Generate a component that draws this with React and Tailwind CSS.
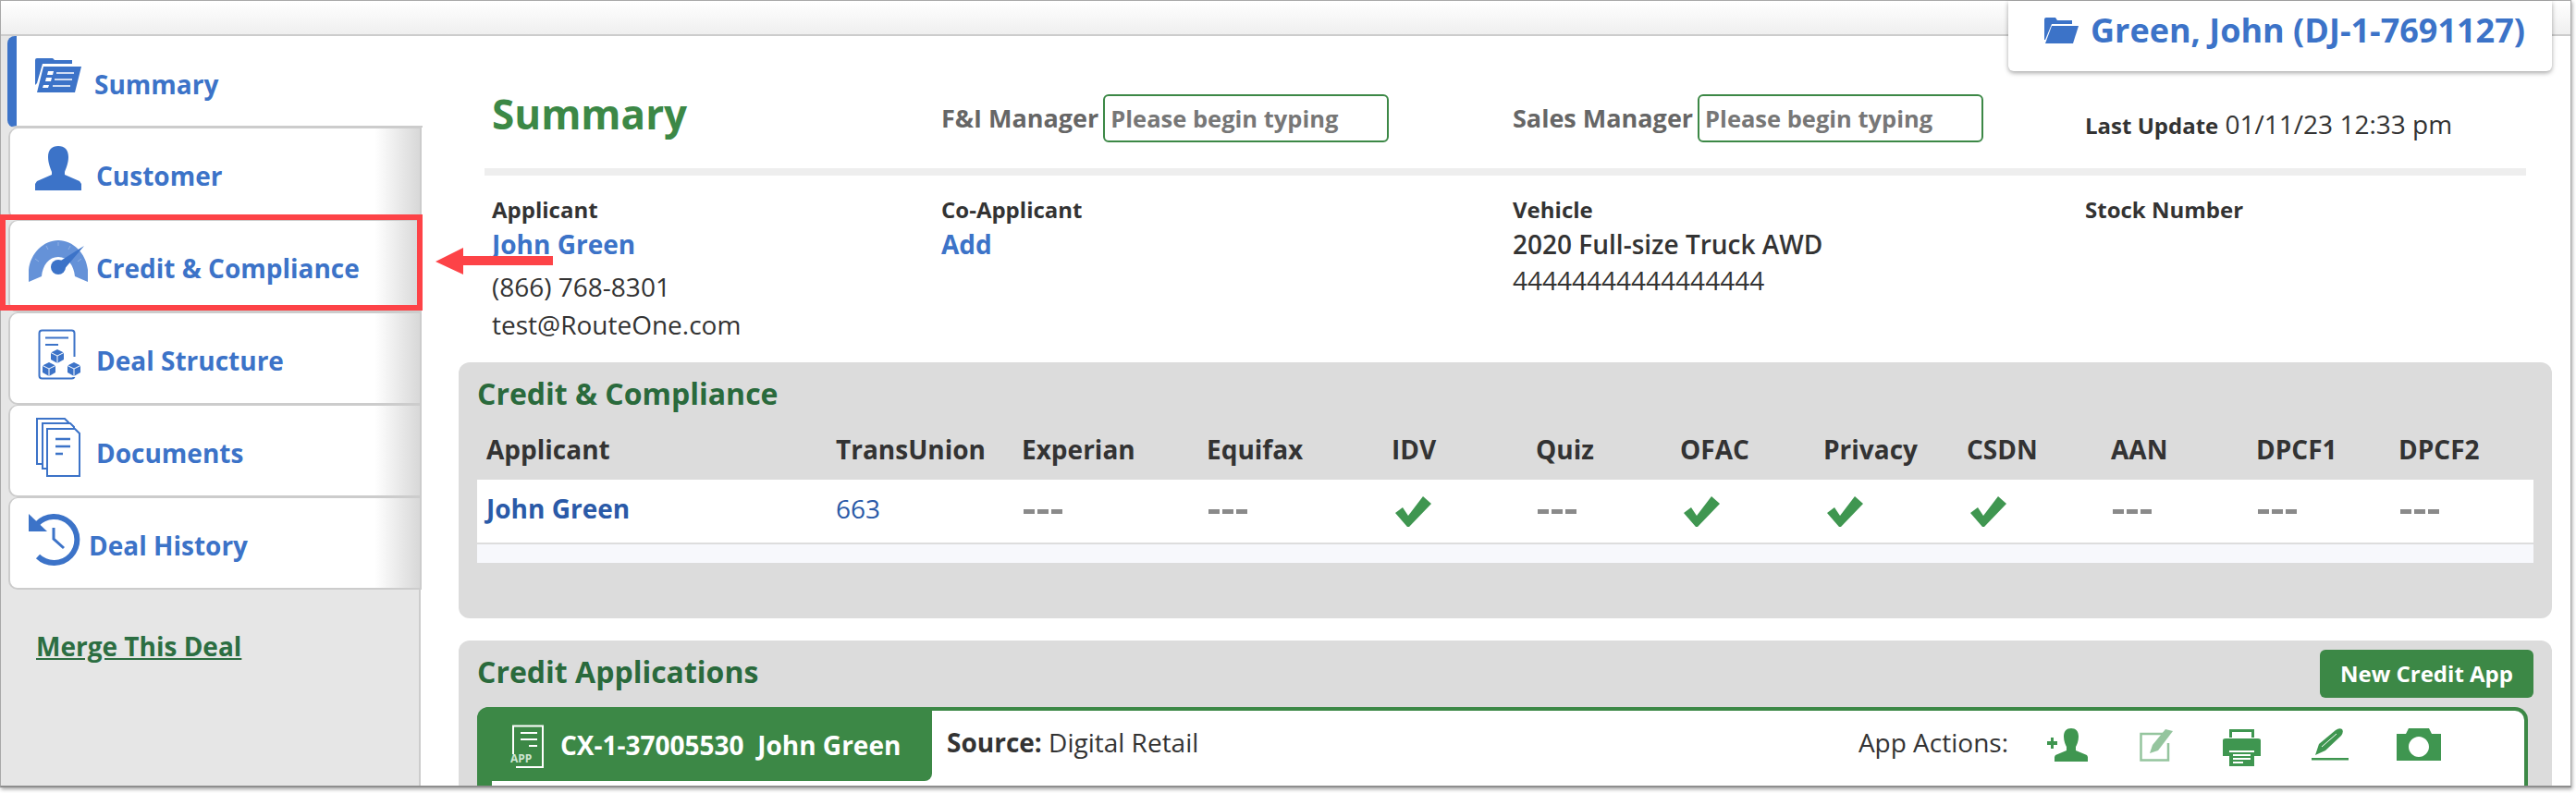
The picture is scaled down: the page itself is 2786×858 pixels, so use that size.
import React from 'react';

const tableCols = 'grid grid-cols-[378px_201px_200px_200px_156px_156px_155px_155px_156px_157px_154px_1fr]';

const SummaryIcon = () => (
  <svg width="50" height="38" viewBox="0 0 50 38" fill="#3c73c8">
    <path d="M0 3 Q0 1 2 1 H19 L21 3 H40 V7 H8 L2 28 L0 30 Z" />
    <path d="M9 10 H50 L43 38 H2 Z" />
    <path d="M14 15 H20 L19 19 H13 Z M12 22 H18 L17 26 H11 Z M9 30 H15 L14 33 H8 Z" fill="#fff" />
    <path d="M23 17 H42 M21 24 H40 M19 31 H38" stroke="#fff" strokeWidth="1.5" />
  </svg>
);

const UserIcon = () => (
  <svg width="50" height="48" viewBox="0 0 50 48" fill="#3c73c8">
    <path d="M25 0 C32 0 36 4 36 12 C36 19 33 25 32 28 V31 L48 38 L50 41 V48 H0 V41 L2 38 L18 31 V28 C17 25 14 19 14 12 C14 4 18 0 25 0 Z" />
  </svg>
);

const GaugeIcon = () => (
  <svg width="64" height="45" viewBox="0 0 64 45">
    <path d="M0 45 V32 C2 14 16 0 32 0 C48 0 62 14 64 32 V45 L50 39 C49 27 42 18 32 18 C22 18 15 27 14 39 Z" fill="#6592d8" />
    <path d="M7 20 L11 23 M19 6 L21 10 M32 2 V6 M45 6 L43 10 M57 20 L53 23" stroke="#8fb0e4" strokeWidth="1" />
    <circle cx="32" cy="29" r="8" fill="#3c73c8" />
    <path d="M30 25 L60 6 L37 33 Z" fill="#3c73c8" />
  </svg>
);

const Cube = ({ x, y }) => (
  <g transform={`translate(${x} ${y})`}>
    <path d="M7 0 L14 3.5 V11 L7 15 L0 11 V3.5 Z" fill="#3c73c8" />
    <path d="M0 3.5 L7 7 L14 3.5 M7 7 V15" stroke="#fff" strokeWidth="1" fill="none" />
  </g>
);

const StructureIcon = () => (
  <svg width="47" height="56" viewBox="0 0 47 56" fill="none">
    <rect x="1.5" y="1.5" width="38" height="52" rx="3" stroke="#3c73c8" strokeWidth="2" />
    <path d="M8 9.5 H33 M8 17 H22" stroke="#3c73c8" strokeWidth="2" />
    <rect x="10" y="20" width="24" height="30" fill="#fff" stroke="none" />
    <rect x="30" y="30" width="17" height="22" fill="#fff" />
    <Cube x="14" y="22" />
    <Cube x="5" y="36" />
    <Cube x="32" y="36" />
  </svg>
);

const DocumentsIcon = () => (
  <svg width="49" height="64" viewBox="0 0 49 64" fill="#fff" stroke="#3c73c8" strokeWidth="2">
    <path d="M2 1 H32 L36 5 V50 H2 Z" />
    <path d="M8 6 H38 L42 10 V55 H8 Z" />
    <path d="M13 12 H43 L48 17 V63 H13 Z" />
    <path d="M22 23 H38 M22 31 H38 M22 39 H30" strokeWidth="2.5" fill="none" />
  </svg>
);

const HistoryIcon = () => (
  <svg width="57" height="57" viewBox="0 0 57 57" fill="none">
    <path d="M9 12 A25 25 0 1 1 10 47" stroke="#3c73c8" strokeWidth="6" />
    <path d="M0 1 L20 20 H0 Z" fill="#3c73c8" />
    <path d="M27 16 V28 L38 38" stroke="#3c73c8" strokeWidth="3" />
  </svg>
);

const FolderOpen = () => (
  <svg width="37" height="28" viewBox="0 0 37 28" fill="#3c73c8">
    <path d="M0 2 Q0 0 2 0 H12 L14 3 H30 V7 H8 L1 24 H0 Z" />
    <path d="M8 9 H37 L31 28 H1 Z" />
  </svg>
);

const Check = () => (
  <svg className="ml-[2px]" width="39" height="33" viewBox="0 0 39 33" fill="#3f9650">
    <path d="M0 18 L8 12 L14 21 L30 0 L39 8 L15 33 L13 33 Z" />
  </svg>
);

const Dashes = () => (
  <div className="flex gap-[3px]">
    <span className="w-[12px] h-[5px] bg-[#8a8a8a]" />
    <span className="w-[12px] h-[5px] bg-[#8a8a8a]" />
    <span className="w-[12px] h-[5px] bg-[#8a8a8a]" />
  </div>
);

const AppIcon = () => (
  <svg className="mt-[6px]" width="38" height="48" viewBox="0 0 38 48" fill="none" stroke="#fff">
    <path d="M3 32 V1.5 H35 V46 H6" strokeWidth="2" />
    <path d="M11 9 H29 M11 16 H29 M20 23 H29" strokeWidth="2" />
    <text x="0" y="41" fontSize="12" fontWeight="700" fill="#cfe6d3" stroke="none" fontFamily="Open Sans">APP</text>
  </svg>
);

const AddUserIcon = () => (
  <svg width="44" height="36" viewBox="0 0 44 36" fill="#3f9650">
    <path d="M26 0 C31 0 34 3 34 9 C34 14 32 18 31 20 V24 L43 29 L44 31 V36 H8 V31 L9 29 L21 24 V20 C20 18 18 14 18 9 C18 3 21 0 26 0 Z" />
    <path d="M0 14 H4 V10 H7 V14 H11 V18 H7 V22 H4 V18 H0 Z" />
  </svg>
);

const EditIcon = () => (
  <svg width="36" height="36" viewBox="0 0 36 36" fill="none" opacity="0.55">
    <path d="M26 6 H1.5 V34.5 H31 V16" stroke="#3f9650" strokeWidth="2.5" />
    <path d="M11 27 L14 18 L28 1 L36 3 L20 24 Z" fill="#3f9650" />
  </svg>
);

const PrintIcon = () => (
  <svg width="41" height="41" viewBox="0 0 41 41" fill="#3f9650">
    <path d="M7 1 H34 V10 H31 V4 H10 V10 H7 Z" />
    <path d="M0 13 Q0 11 3 11 H38 Q41 11 41 13 V30 H34 V24 H7 V30 H0 Z" />
    <path d="M7 26 H34 V41 H7 Z" />
    <path d="M11 29 H30 M11 33 H30 M11 37 H22" stroke="#fff" strokeWidth="2" />
  </svg>
);

const PenIcon = () => (
  <svg width="41" height="36" viewBox="0 0 41 36" fill="#3f9650">
    <path d="M4 29 L8 17 L26 2 Q30 -1 33 1 Q35 4 32 8 L15 24 Z" />
    <path d="M11 20 L27 6" stroke="#fff" strokeWidth="1" />
    <rect x="0" y="32" width="40" height="2.5" />
  </svg>
);

const CameraIcon = () => (
  <svg width="48" height="35" viewBox="0 0 48 35" fill="#3f9650">
    <path fillRule="evenodd" d="M0 6 H10 L13 0 H35 L38 6 H48 V35 H0 Z M24 9 C18 9 13 14 13 20 C13 26 18 31 24 31 C30 31 35 26 35 20 C35 14 30 9 24 9 Z" />
    <ellipse cx="24" cy="20" rx="6" ry="10" fill="#fff" />
  </svg>
);

const tabs = [
  { label: 'Customer', icon: <UserIcon />, iconClass: 'ml-[27px] mb-[12px]', labelClass: 'ml-[16px]' },
  { label: 'Credit & Compliance', icon: <GaugeIcon />, iconClass: 'ml-[20px] mb-[10px]', labelClass: 'ml-[9px]' },
  { label: 'Deal Structure', icon: <StructureIcon />, iconClass: 'ml-[30px] mb-[8px]', labelClass: 'ml-[16px]' },
  { label: 'Documents', icon: <DocumentsIcon />, iconClass: 'ml-[27px] mb-[8px]', labelClass: 'ml-[17px]' },
  { label: 'Deal History', icon: <HistoryIcon />, iconClass: 'ml-[20px] mb-[8px]', labelClass: 'ml-[8px]' },
];

const bureauRow = [
  <Dashes />, <Dashes />, <Check />, <Dashes />, <Check />, <Check />, <Check />, <Dashes />, <Dashes />, <Dashes />,
];

const App = () => {
  return (
    <div className="relative w-[2786px] h-[858px] bg-white overflow-hidden font-['Open_Sans',sans-serif] text-[#333]">
      {/* Window frame */}
      <div className="w-[2781px] h-[852px] flex flex-col border border-[#a8a8a8] border-b-2 border-b-[#8e8e8e] shadow-[1px_2px_4px_rgba(0,0,0,0.35)] overflow-hidden">
        <div className="h-[38px] shrink-0 bg-linear-to-b from-white to-[#efefef] border-b-2 border-[#ccc]" />

        <div className="flex flex-1 min-h-0">
          {/* Sidebar */}
          <div className="w-[454px] shrink-0 bg-[#e6e6e6] border-r-2 border-[#ccc]">
            <div className="relative w-[449px] h-[99px] ml-[7px] flex items-center bg-white border-l-[10px] border-[#3c73c8] border-b-2 border-b-[#ccc] rounded-l-[8px]">
              <div className="ml-[20px] mb-[14px]"><SummaryIcon /></div>
              <span className="ml-[14px] pt-[6px] text-[28px] font-bold text-[#3c73c8]">Summary</span>
            </div>
            {tabs.map((tab) => (
              <div
                key={tab.label}
                className="w-[447px] h-[100px] ml-[8px] flex items-center bg-linear-to-r from-white from-[89%] to-[#d8d8d8] border-2 border-t-[1px] border-[#ccc] border-r-[#ccc] rounded-l-[10px]"
              >
                <div className={tab.iconClass}>{tab.icon}</div>
                <span className={`${tab.labelClass} pt-[5px] text-[28px] font-bold text-[#3c73c8]`}>{tab.label}</span>
              </div>
            ))}
            <div className="mt-[40px] ml-[38px]">
              <a className="text-[28px] font-bold text-[#2c6e42] underline">Merge This Deal</a>
            </div>
          </div>

          {/* Main */}
          <div className="flex-1 min-w-0 pl-[41px] pr-[20px]">
            <div className="mx-[28px]">
              <div className="grid grid-cols-[486px_618px_619px_1fr] h-[151px] items-center border-b-8 border-[#eee] pl-[8px] pt-[35px]">
                <h1 className="text-[44px] font-bold text-[#3c8846] -mt-[10px]">Summary</h1>
                <div className="flex items-center gap-[5px]">
                  <span className="text-[27px] font-bold text-[#666]">F&amp;I Manager</span>
                  <div className="w-[309px] h-[52px] flex items-center pl-[6px] border-2 border-[#3c8846] rounded-[6px] text-[25.5px] font-bold text-[#777]">Please begin typing</div>
                </div>
                <div className="flex items-center gap-[5px]">
                  <span className="text-[27px] font-bold text-[#666]">Sales Manager</span>
                  <div className="w-[309px] h-[52px] flex items-center pl-[6px] border-2 border-[#3c8846] rounded-[6px] text-[25.5px] font-bold text-[#777]">Please begin typing</div>
                </div>
                <div className="text-[28px] mt-[12px] whitespace-nowrap">
                  <span className="font-bold text-[24px]">Last Update</span> 01/11/23 12:33 pm
                </div>
              </div>

              <div className="grid grid-cols-[486px_618px_619px_1fr] pl-[8px] pt-[20px] h-[202px] leading-[40px] text-[28px]">
                <div>
                  <div className="text-[24px] font-bold leading-[34px]">Applicant</div>
                  <div className="font-bold text-[#3c73c8]">John Green</div>
                  <div className="mt-[6px]">(866) 768-8301</div>
                  <div className="mt-[1px]">test@RouteOne.com</div>
                </div>
                <div>
                  <div className="text-[24px] font-bold leading-[34px]">Co-Applicant</div>
                  <div className="font-bold text-[#3c73c8]">Add</div>
                </div>
                <div>
                  <div className="text-[24px] font-bold leading-[34px]">Vehicle</div>
                  <div className="font-semibold">2020 Full-size Truck AWD</div>
                  <div className="-mt-[1px]">44444444444444444</div>
                </div>
                <div>
                  <div className="text-[24px] font-bold leading-[34px]">Stock Number</div>
                </div>
              </div>
            </div>

            {/* Credit & Compliance */}
            <div className="h-[277px] bg-[#dcdcdc] rounded-[12px] px-[20px] pt-[12px]">
              <h2 className="text-[32px] font-bold text-[#2a6a3c] h-[44px] leading-[44px]">Credit &amp; Compliance</h2>
              <div className={`${tableCols} h-[71px] items-center pl-[10px] pt-[5px] text-[28px] font-bold`}>
                <div>Applicant</div>
                <div>TransUnion</div>
                <div>Experian</div>
                <div>Equifax</div>
                <div>IDV</div>
                <div>Quiz</div>
                <div>OFAC</div>
                <div>Privacy</div>
                <div>CSDN</div>
                <div>AAN</div>
                <div>DPCF1</div>
                <div>DPCF2</div>
              </div>
              <div className="bg-[#f7f8fc] h-[90px]">
                <div className={`${tableCols} h-[70px] items-center pl-[10px] bg-white border-b-2 border-[#ddd]`}>
                  <div className="text-[28px] font-bold text-[#2a5aa8] -mt-[7px]">John Green</div>
                  <div className="text-[28px] text-[#2a5aa8] -mt-[7px]">663</div>
                  {bureauRow.map((cell, i) => (
                    <div key={i} className="pl-[2px]">{cell}</div>
                  ))}
                </div>
              </div>
            </div>

            {/* Credit Applications */}
            <div className="mt-[24px] h-[200px] bg-[#dcdcdc] rounded-t-[12px] px-[20px] pt-[10px]">
              <div className="flex items-center justify-between h-[52px] mb-[10px]">
                <h2 className="text-[32px] font-bold text-[#2a6a3c] -mt-[4px]">Credit Applications</h2>
                <button className="w-[231px] h-[52px] bg-[#3c8846] rounded-[6px] text-[24px] font-bold text-white">New Credit App</button>
              </div>
              <div className="flex h-[120px] bg-white border-t-4 border-r-4 border-l-[16px] border-[#3c8846] rounded-t-[14px] mr-[6px]">
                <div className="w-[492px] h-[80px] shrink-0 -ml-[16px] -mt-[4px] flex items-center pl-[36px] gap-[16px] bg-[#3c8846] rounded-br-[8px] rounded-tl-[12px] text-white text-[28px] font-bold">
                  <AppIcon />
                  <span className="whitespace-pre pt-[2px]">CX-1-37005530  John Green</span>
                </div>
                <div className="flex-1 flex items-start justify-between pt-[19px] pl-[16px] text-[28px] leading-[36px]">
                  <div className="-mt-[3px]"><span className="font-bold">Source:</span> Digital Retail</div>
                  <div className="flex items-start">
                    <span className="-mt-[3px]">App Actions:</span>
                    <div className="flex items-start ml-[42px] mr-[90px]">
                      <AddUserIcon />
                      <div className="ml-[56px]"><EditIcon /></div>
                      <div className="ml-[54px]"><PrintIcon /></div>
                      <div className="ml-[55px]"><PenIcon /></div>
                      <div className="ml-[51px]"><CameraIcon /></div>
                    </div>
                  </div>
                </div>
              </div>
            </div>
          </div>
        </div>
      </div>

      {/* Deal tab hanging over the top bar */}
      <div className="absolute left-[2172px] top-[1px] w-[588px] h-[76px] flex items-center pl-[39px] gap-[13px] bg-white rounded-b-[6px] shadow-[0_2px_5px_rgba(0,0,0,0.35)] pb-[12px]">
        <FolderOpen />
        <span className="text-[36px] font-bold text-[#3c73c8] whitespace-nowrap">Green, John (DJ-1-7691127)</span>
      </div>

      {/* Annotation: red box and arrow */}
      <div className="absolute left-0 top-[232px] w-[457px] h-[104px] border-[6px] border-[#fd4347]" />
      <svg className="absolute left-[470px] top-[266px]" width="130" height="34" viewBox="0 0 130 34" fill="#fd4347">
        <path d="M1 17 L31 2 V11 H128 V21 H31 V31 Z" />
      </svg>
    </div>
  );
};

export default App;
